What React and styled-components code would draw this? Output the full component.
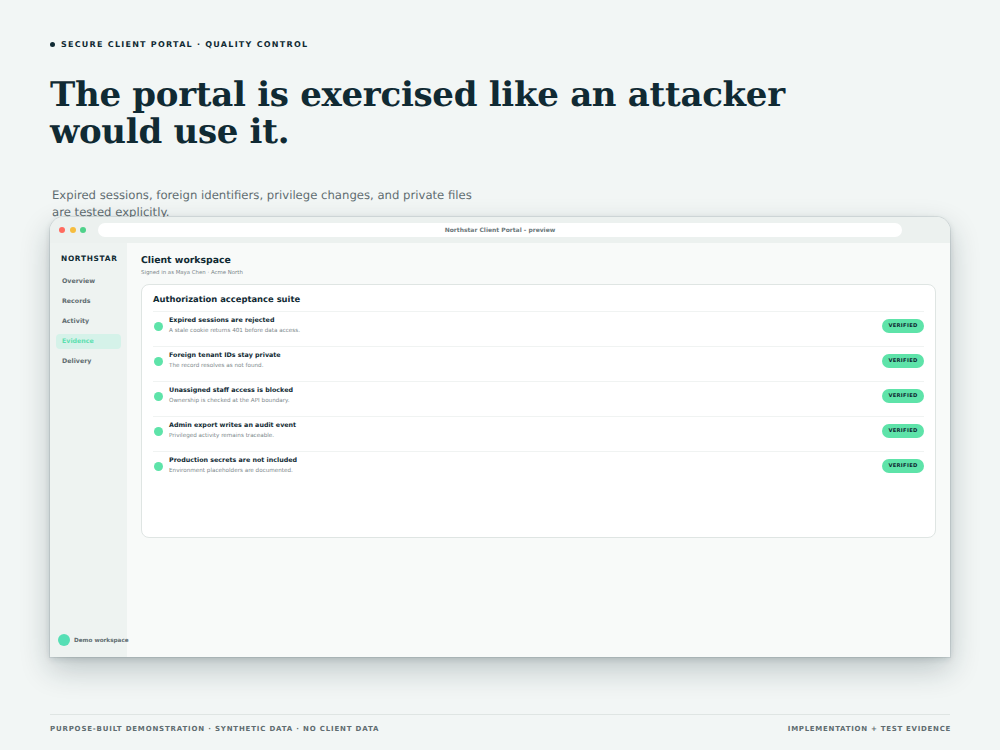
import React from 'react'
import styled, { createGlobalStyle } from 'styled-components'

const GlobalStyle = createGlobalStyle`
  html, body {
    margin: 0;
    padding: 0;
    background: #f2f6f5;
    text-rendering: geometricPrecision;
  }

  * {
    box-sizing: border-box;
  }
`

const Page = styled.div`
  width: 1000px;
  height: 750px;
  overflow: hidden;
  display: flex;
  flex-direction: column;
  padding: 0 50px;
  background: #f2f6f5;
  color: #102a33;
  font-family: 'DejaVu Sans', sans-serif;
`

const Header = styled.header`
  height: 217px;
  flex: none;
  padding-top: 39px;
`

const Eyebrow = styled.div`
  display: flex;
  align-items: center;
  gap: 6px;
  height: 11px;
  font-size: 8px;
  font-weight: 700;
  letter-spacing: 1.25px;
  line-height: 11px;
`

const EyebrowDot = styled.span`
  width: 5px;
  height: 5px;
  border-radius: 50%;
  background: #102a33;
`

const Title = styled.h1`
  margin: 27px 0 0;
  font-family: 'DejaVu Serif', serif;
  font-size: 34px;
  font-weight: 700;
  letter-spacing: -0.29px;
  line-height: 37px;
`

const Lede = styled.p`
  width: 425px;
  margin: 36px 0 0 2px;
  color: #5f6c70;
  font-size: 11.66px;
  line-height: 17px;
`

const Window = styled.section`
  position: relative;
  height: 440px;
  flex: none;
  display: flex;
  flex-direction: column;
  overflow: hidden;
  border-radius: 14px 14px 0 0;
  background: #f8faf9;
  box-shadow: 0 0 0 1px rgba(16, 42, 51, 0.08), 0 2px 6px rgba(16, 42, 51, 0.14),
    0 12px 30px rgba(16, 42, 51, 0.24);
`

const TitleBar = styled.div`
  height: 26px;
  flex: none;
  display: flex;
  align-items: center;
  padding: 0 48px 0 9px;
  background: #ecf1ef;
`

const Lights = styled.div`
  display: flex;
  gap: 4.7px;
  margin-right: 11.6px;
`

const Light = styled.span`
  width: 6px;
  height: 6px;
  border-radius: 50%;
  background: ${({ $color }) => $color};
`

const AddressBar = styled.div`
  flex: 1;
  height: 14px;
  border-radius: 7px;
  background: #fff;
  color: #6b777a;
  font-size: 6px;
  font-weight: 700;
  line-height: 15px;
  text-align: center;
`

const Body = styled.div`
  flex: 1;
  display: flex;
  min-height: 0;
`

const Sidebar = styled.aside`
  width: 77px;
  flex: none;
  display: flex;
  flex-direction: column;
  padding: 11px 6px 11px;
  background: #eef3f1;
`

const Brand = styled.div`
  padding-left: 5px;
  height: 10px;
  color: #102a33;
  font-size: 7.4px;
  font-weight: 700;
  letter-spacing: 0.7px;
  line-height: 10px;
`

const Nav = styled.nav`
  display: flex;
  flex-direction: column;
  gap: 5px;
  margin-top: 10px;
`

const NavItem = styled.a`
  height: 15px;
  padding-left: 6px;
  border-radius: 4px;
  background: ${({ $active }) => ($active ? '#d5f2e9' : 'transparent')};
  color: ${({ $active }) => ($active ? '#5de0b0' : '#5f6c70')};
  font-size: 6.3px;
  font-weight: 700;
  line-height: 15px;
`

const Workspace = styled.div`
  display: flex;
  align-items: center;
  gap: 4px;
  margin-top: auto;
  margin-left: 2px;
  color: #5f6c70;
  font-size: 5.7px;
  font-weight: 700;
  white-space: nowrap;
`

const WorkspaceDot = styled.span`
  width: 12px;
  height: 12px;
  flex: none;
  border-radius: 50%;
  background: #56dfb5;
`

const WorkspaceLabel = styled.span`
  padding-top: 1px;
`

const Main = styled.main`
  flex: 1;
  min-width: 0;
  padding: 12px 14px 0;
`

const MainTitle = styled.h2`
  margin: 0;
  color: #102a33;
  font-size: 9.3px;
  font-weight: 700;
  line-height: 12px;
`

const MainSub = styled.div`
  margin-top: 2px;
  color: #7b878a;
  font-size: 5.4px;
  line-height: 8px;
`

const Card = styled.div`
  height: 254px;
  margin-top: 7px;
  padding: 9px 11px;
  border: 1px solid #dfe5e3;
  border-radius: 8px;
  background: #fff;
`

const CardTitle = styled.h3`
  margin: 0 0 6px;
  color: #102a33;
  font-size: 8.4px;
  font-weight: 700;
  line-height: 11px;
`

const Row = styled.div`
  height: 35px;
  display: flex;
  align-items: center;
  gap: 6px;
  padding: 0 0 6px 1px;
  border-top: 1px solid #f0f3f2;
`

const StatusDot = styled.span`
  width: 9px;
  height: 9px;
  flex: none;
  border-radius: 50%;
  background: #5ee3a9;
`

const RowText = styled.div`
  flex: 1;
  min-width: 0;
  padding-bottom: 1px;
`

const RowTitle = styled.div`
  color: #102a33;
  font-size: 6.35px;
  font-weight: 700;
  line-height: 9px;
`

const RowSub = styled.div`
  margin-top: 2px;
  color: #7b878a;
  font-size: 5.65px;
  line-height: 8px;
`

const Badge = styled.span`
  width: 42px;
  height: 14px;
  flex: none;
  border-radius: 7px;
  background: #5ee3a9;
  color: #102a33;
  font-size: 5.2px;
  font-weight: 700;
  letter-spacing: 0.3px;
  line-height: 14px;
  text-align: center;
`

const Footer = styled.footer`
  display: flex;
  justify-content: space-between;
  margin-top: 57px;
  padding-top: 9px;
  border-top: 1px solid #dfe5e3;
  color: #5f6c70;
  font-size: 7px;
  font-weight: 700;
  letter-spacing: 0.82px;
  line-height: 10px;
`

const FooterNote = styled.span`
  margin-right: -1px;
  letter-spacing: 0.72px;
`

const navItems = ['Overview', 'Records', 'Activity', 'Evidence', 'Delivery']

const checks = [
  ['Expired sessions are rejected', 'A stale cookie returns 401 before data access.'],
  ['Foreign tenant IDs stay private', 'The record resolves as not found.'],
  ['Unassigned staff access is blocked', 'Ownership is checked at the API boundary.'],
  ['Admin export writes an audit event', 'Privileged activity remains traceable.'],
  ['Production secrets are not included', 'Environment placeholders are documented.'],
]

const App = () => (
  <Page>
    <GlobalStyle />
    <Header>
      <Eyebrow>
        <EyebrowDot />
        SECURE CLIENT PORTAL · QUALITY CONTROL
      </Eyebrow>
      <Title>
        The portal is exercised like an attacker
        <br />
        would use it.
      </Title>
      <Lede>
        Expired sessions, foreign identifiers, privilege changes, and private files are tested
        explicitly.
      </Lede>
    </Header>

    <Window>
      <TitleBar>
        <Lights>
          <Light $color="#ff6b5f" />
          <Light $color="#f6bd3f" />
          <Light $color="#4fd28a" />
        </Lights>
        <AddressBar>Northstar Client Portal - preview</AddressBar>
      </TitleBar>
      <Body>
        <Sidebar>
          <Brand>NORTHSTAR</Brand>
          <Nav>
            {navItems.map((item) => (
              <NavItem key={item} $active={item === 'Evidence'}>
                {item}
              </NavItem>
            ))}
          </Nav>
          <Workspace>
            <WorkspaceDot />
            <WorkspaceLabel>Demo workspace</WorkspaceLabel>
          </Workspace>
        </Sidebar>
        <Main>
          <MainTitle>Client workspace</MainTitle>
          <MainSub>Signed in as Maya Chen · Acme North</MainSub>
          <Card>
            <CardTitle>Authorization acceptance suite</CardTitle>
            {checks.map(([title, sub]) => (
              <Row key={title}>
                <StatusDot />
                <RowText>
                  <RowTitle>{title}</RowTitle>
                  <RowSub>{sub}</RowSub>
                </RowText>
                <Badge>VERIFIED</Badge>
              </Row>
            ))}
          </Card>
        </Main>
      </Body>
    </Window>

    <Footer>
      <span>PURPOSE-BUILT DEMONSTRATION · SYNTHETIC DATA · NO CLIENT DATA</span>
      <FooterNote>IMPLEMENTATION + TEST EVIDENCE</FooterNote>
    </Footer>
  </Page>
)

export default App
